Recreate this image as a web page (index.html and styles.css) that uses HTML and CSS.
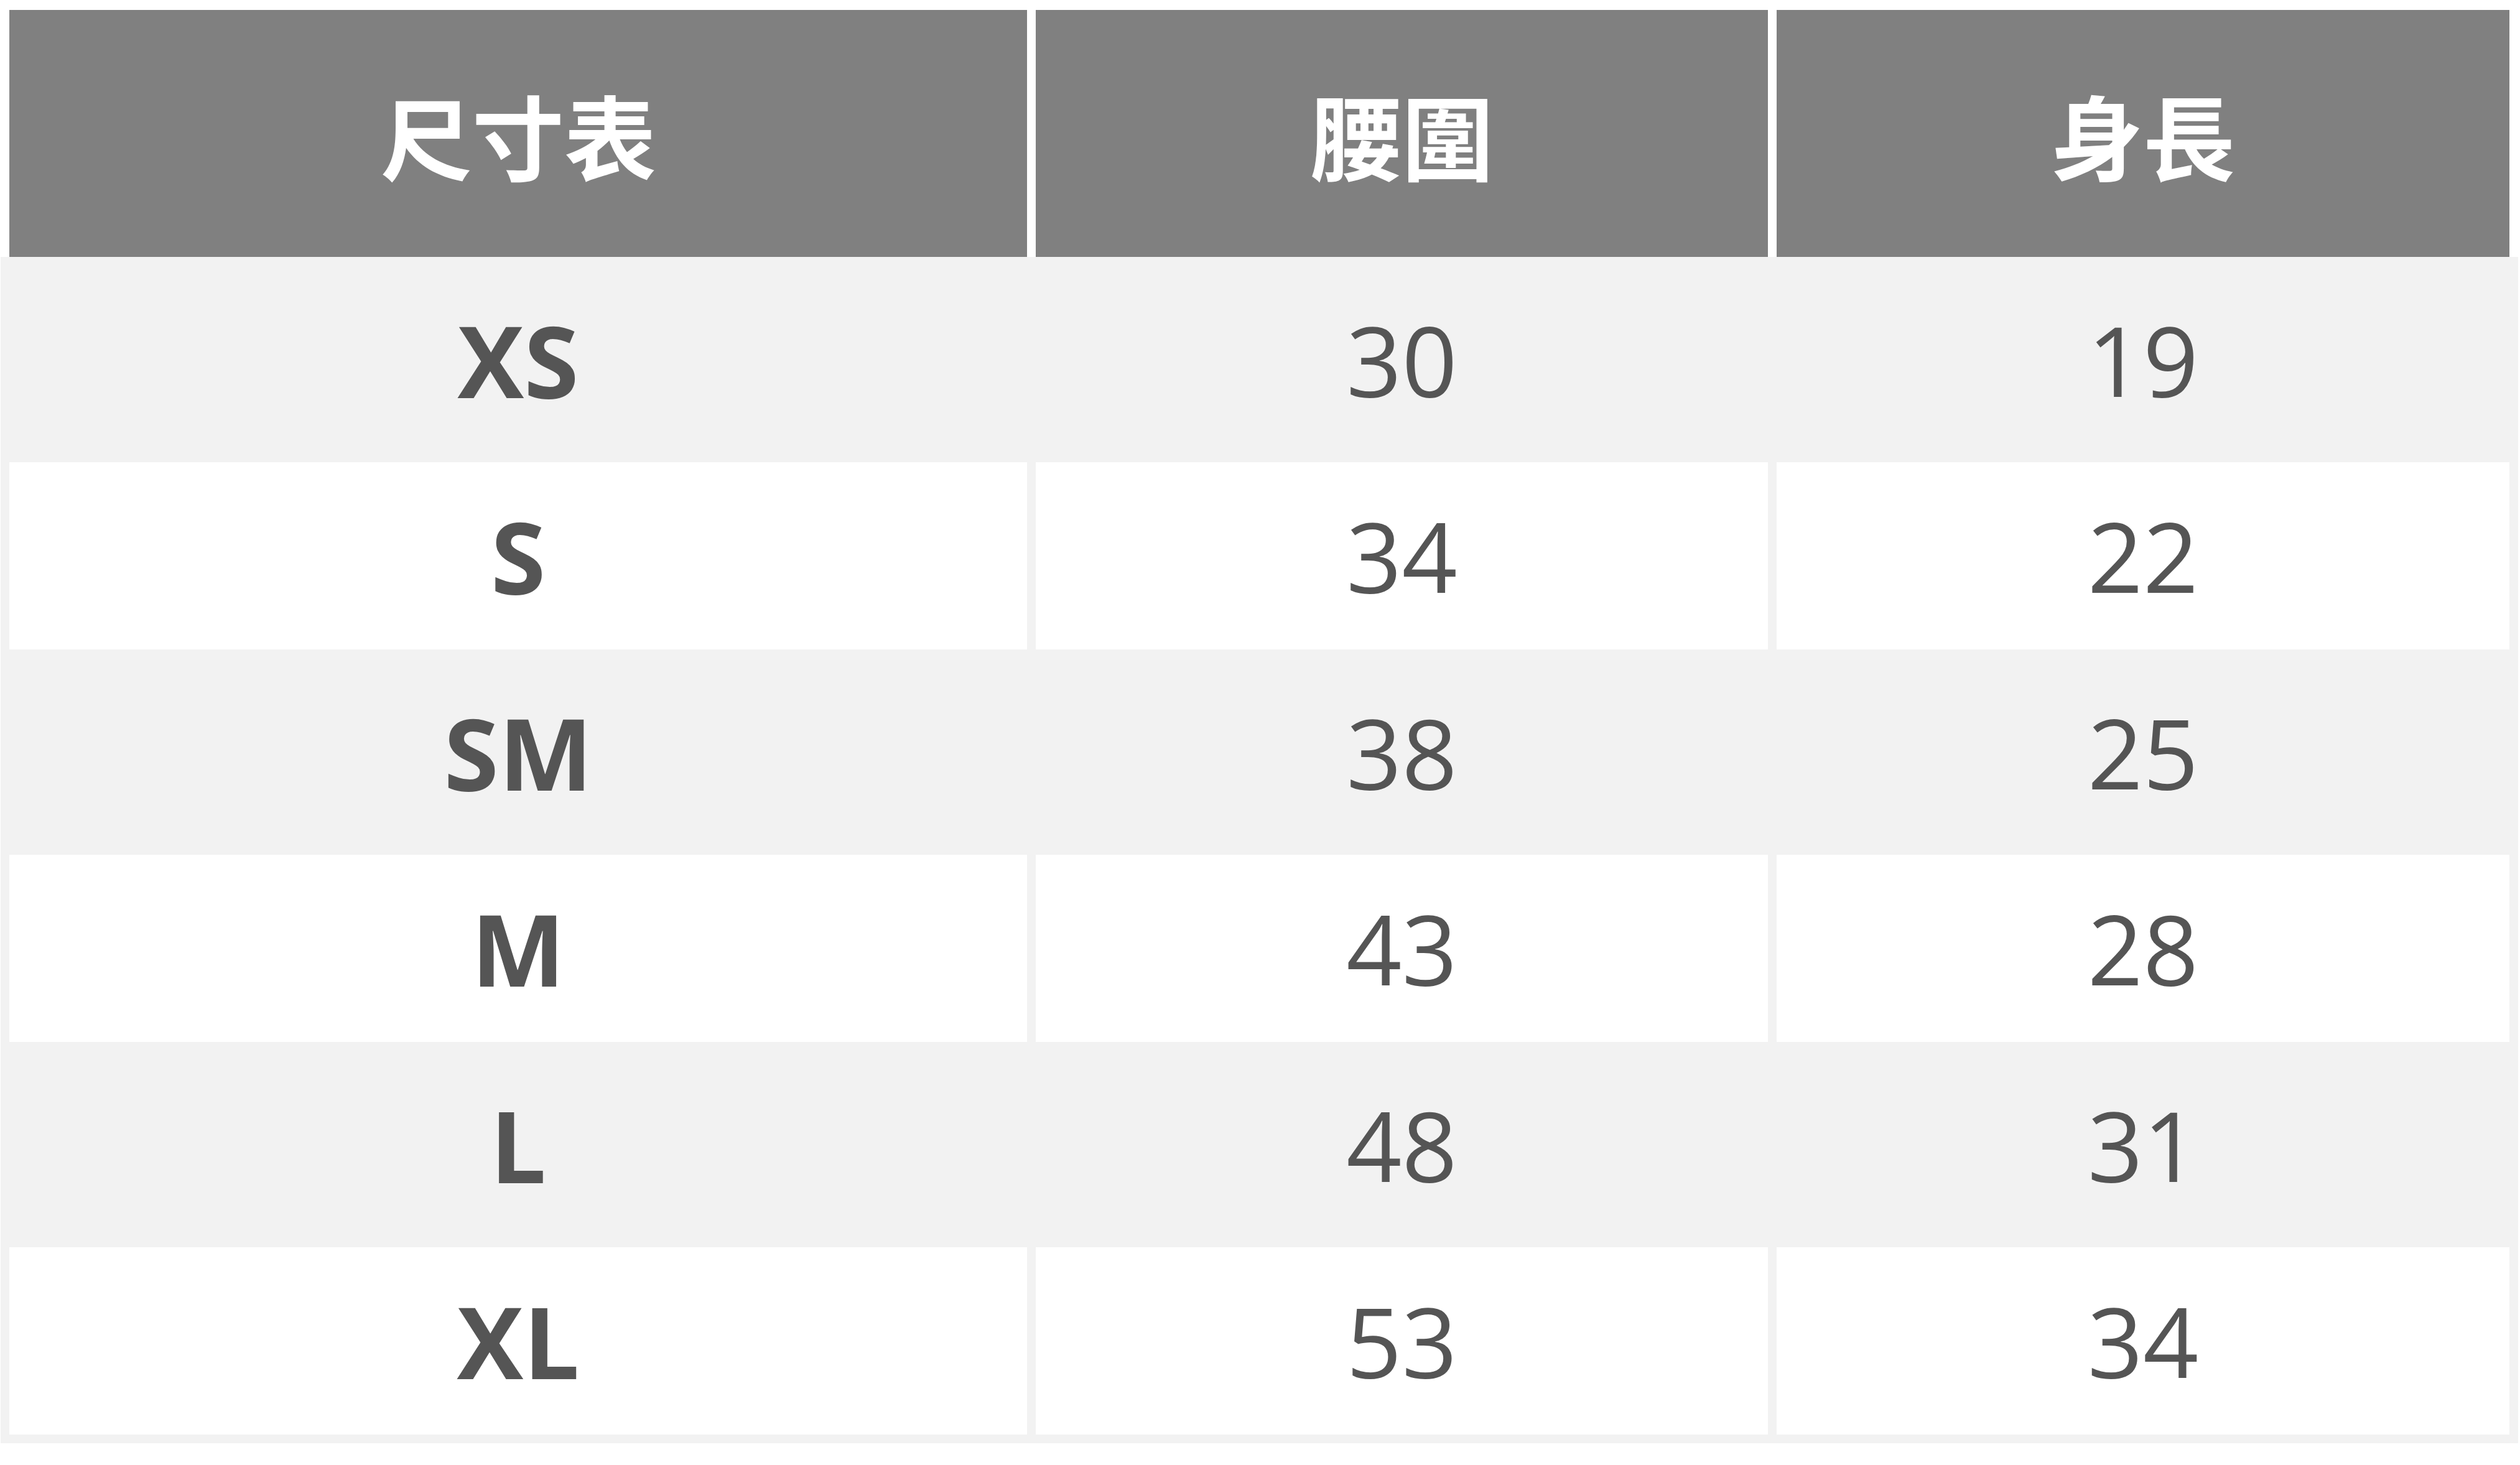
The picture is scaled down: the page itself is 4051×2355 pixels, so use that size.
FILE: index.html
```html
<!DOCTYPE html>
<html lang="zh-Hant">
<head>
<meta charset="utf-8">
<title>尺寸表</title>
<link rel="stylesheet" href="styles.css">
</head>
<body>
<div class="sheet">
  <div class="head">
    <div class="hcell">尺寸表</div>
    <div class="hcell">腰圍</div>
    <div class="hcell">身長</div>
  </div>
  <div class="rows">
    <div class="cell size alt">XS</div><div class="cell alt">30</div><div class="cell alt">19</div>
    <div class="cell size">S</div><div class="cell">34</div><div class="cell">22</div>
    <div class="cell size alt">SM</div><div class="cell alt">38</div><div class="cell alt">25</div>
    <div class="cell size">M</div><div class="cell">43</div><div class="cell">28</div>
    <div class="cell size alt">L</div><div class="cell alt">48</div><div class="cell alt">31</div>
    <div class="cell size">XL</div><div class="cell">53</div><div class="cell">34</div>
  </div>
</div>
</body>
</html>
```

FILE: styles.css
```css
html, body {
  background: #ffffff;
}
body {
  margin: 2px 0 0 1px;
}
.sheet {
  width: 4047px;
}
.head {
  display: grid;
  grid-template-columns: 1636px 1177px 1178px;
  column-gap: 14px;
  padding: 14px 14px 0 14px;
  background: #ffffff;
}
.hcell {
  height: 397px;
  background: #808080;
  color: #ffffff;
  display: flex;
  align-items: center;
  justify-content: center;
  font-family: "Noto Sans CJK TC", "Noto Sans CJK SC", sans-serif;
  font-weight: 700;
  font-size: 148px;
  line-height: 1;
}
.rows {
  display: grid;
  grid-template-columns: 1636px 1177px 1178px;
  grid-auto-rows: 301.5px;
  gap: 14px;
  padding: 14px;
  background: #f2f2f2;
}
.cell {
  background: #ffffff;
  color: #555555;
  display: flex;
  align-items: center;
  justify-content: center;
  font-family: "Open Sans", "Noto Sans", sans-serif;
  font-size: 156px;
  line-height: 1;
}
.cell.alt {
  background: #f2f2f2;
}
.cell.size {
  font-weight: 700;
  font-size: 160px;
}
```
